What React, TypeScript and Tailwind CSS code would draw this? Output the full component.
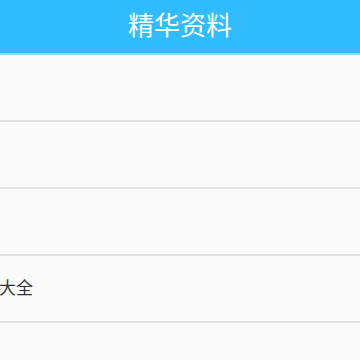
export default function App() {
  const rows = ['', '', '', '大全', ''];
  return (
    <main
      className="w-[360px] h-[360px] overflow-hidden bg-[#fafafa] flex flex-col"
      style={{ fontFamily: '"Noto Sans CJK SC", "Noto Sans", sans-serif' }}
    >
      {/* Header */}
      <header className="h-[55px] shrink-0 bg-[#31bcff] border-b-2 border-[#8fd9fb] flex items-center justify-center">
        <h1 className="text-[26px] leading-none text-white -mt-[6px]">精华资料</h1>
      </header>

      {/* List */}
      <ul className="flex flex-col">
        {rows.map((label, i) => (
          <li
            key={i}
            className="h-[67px] shrink-0 border-b-2 border-[#e3e3e3] flex items-center -ml-[1px]"
          >
            <span className="text-[17px] leading-none text-[#333333] -mt-[5px]">{label}</span>
          </li>
        ))}
      </ul>
    </main>
  );
}
